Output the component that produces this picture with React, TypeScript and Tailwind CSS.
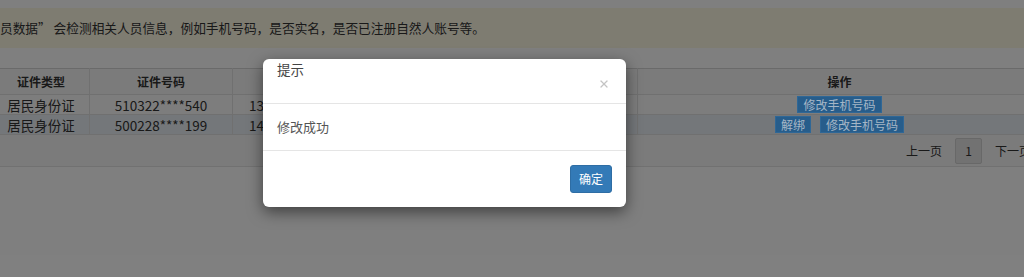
import { X } from "lucide-react";

const rows = [
  { type: "居民身份证", no: "510322****540", phone: "138****6621", actions: ["修改手机号码"], hl: false },
  { type: "居民身份证", no: "500228****199", phone: "147****3308", actions: ["解绑", "修改手机号码"], hl: true },
];

export default function App() {
  return (
    <div
      className="relative h-[277px] w-[1024px] overflow-hidden bg-white text-[#333]"
      style={{ fontFamily: '"Noto Sans CJK SC", "Noto Sans", sans-serif' }}
    >
      <div className="-ml-[8px] w-[1049px] pt-[8px]">
        {/* alert */}
        <div className="flex h-[40px] items-center overflow-hidden whitespace-nowrap bg-[#fcf8e3] text-[12.7px] text-[#333]">
          <span className="ml-[8px]">员数据” 会检测相关人员信息，例如手机号码，是否实名，是否已注册自然人账号等。</span>
        </div>

        {/* table panel */}
        <div className="mt-[20px] border-b border-[#e2e2e2] bg-[#f7f7f7]">
          <table className="w-full table-fixed border-collapse text-center">
            <colgroup>
              <col className="w-[97px]" />
              <col className="w-[143px]" />
              <col className="w-[150px]" />
              <col className="w-[255px]" />
              <col className="w-[404px]" />
            </colgroup>
            <thead>
              <tr className="h-[26px] border-t border-[#d5d5d5] bg-[#f7f7f7] text-[12px] font-bold text-[#333]">
                <th className="border-x border-b border-[#e0e0e0]">证件类型</th>
                <th className="border-x border-b border-[#e0e0e0]">证件号码</th>
                <th className="border-x border-b border-[#e0e0e0]">手机号码</th>
                <th className="border-x border-b border-[#e0e0e0]">状态</th>
                <th className="border-x border-b border-[#e0e0e0]">操作</th>
              </tr>
            </thead>
            <tbody className="text-[13.5px]">
              {rows.map((r) => (
                <tr key={r.no} className={r.hl ? "h-[20px] bg-[#e9eef4]" : "h-[19px] bg-[#fbfbfb]"}>
                  <td className="border-x border-b border-[#e0e0e0] leading-[18px]">{r.type}</td>
                  <td className="border-x border-b border-[#e0e0e0] leading-[18px]">{r.no}</td>
                  <td className="border-x border-b border-[#e0e0e0] pl-[16px] text-left leading-[18px]">{r.phone}</td>
                  <td className="border-x border-b border-[#e0e0e0] pr-[12px] text-right leading-[18px]">
                    {r.hl ? "已认证." : ""}
                  </td>
                  <td className="border-x border-b border-[#e0e0e0] py-[1px]">
                    <div className="flex justify-center gap-[9px]">
                      {r.actions.map((a) => (
                        <button
                          key={a}
                          className="relative z-20 h-[17px] border border-[#2f6796] bg-[#275d8b] px-[5px] text-[12px] leading-[15px] text-[#a5b6c6]"
                        >
                          {a}
                        </button>
                      ))}
                    </div>
                  </td>
                </tr>
              ))}
            </tbody>
          </table>

          {/* pagination */}
          <div className="flex h-[31px] items-center justify-end pr-[10px] text-[12px] text-[#333]">
            <span className="mr-[13px]">上一页</span>
            <span className="flex h-[26px] w-[27px] items-center justify-center rounded-[2px] border border-[#d0d0d0] bg-[#e4e4e4]">
              1
            </span>
            <span className="ml-[13px]">下一页</span>
          </div>
        </div>
      </div>

      {/* backdrop */}
      <div className="absolute inset-0 z-10 bg-black/50" />

      {/* modal */}
      <div className="absolute left-[263px] top-[59px] z-30 w-[363px] rounded-[6px] bg-white shadow-[0_5px_15px_rgba(0,0,0,0.5)]">
        <div className="relative h-[45px] border-b border-[#e5e5e5] px-[14px]">
          <div className="pt-[1px] text-[13.5px] leading-[18px] text-[#444]">提示</div>
          <X className="absolute right-[16px] top-[19px] h-[12px] w-[12px] text-[#c4c4c4]" strokeWidth={2.5} />
        </div>
        <div className="flex h-[47px] items-center border-b border-[#e5e5e5] px-[14px] text-[13px] text-[#555]">
          修改成功
        </div>
        <div className="flex h-[56px] items-center justify-end px-[14px]">
          <button className="h-[28px] w-[42px] rounded-[3px] border border-[#2e6da4] bg-[#337ab7] text-[12px] text-white">
            确定
          </button>
        </div>
      </div>
    </div>
  );
}
